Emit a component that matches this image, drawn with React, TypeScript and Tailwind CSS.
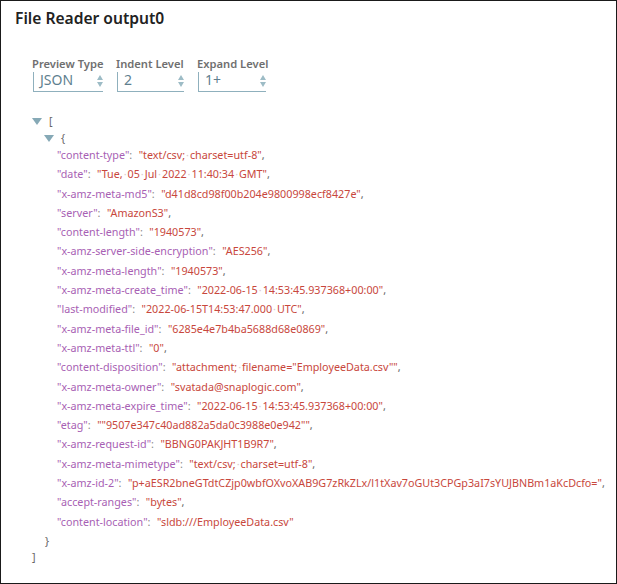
const rows: [string, string][] = [
  ["content-type", "text/csv;~charset=utf-8"],
  ["date", "Tue,~05~Jul~2022~11:40:34~GMT"],
  ["x-amz-meta-md5", "d41d8cd98f00b204e9800998ecf8427e"],
  ["server", "AmazonS3"],
  ["content-length", "1940573"],
  ["x-amz-server-side-encryption", "AES256"],
  ["x-amz-meta-length", "1940573"],
  ["x-amz-meta-create_time", "2022-06-15~14:53:45.937368+00:00"],
  ["last-modified", "2022-06-15T14:53:47.000~UTC"],
  ["x-amz-meta-file_id", "6285e4e7b4ba5688d68e0869"],
  ["x-amz-meta-ttl", "0"],
  ["content-disposition", "attachment;~filename=\"EmployeeData.csv\""],
  ["x-amz-meta-owner", "svatada@snaplogic.com"],
  ["x-amz-meta-expire_time", "2022-06-15~14:53:45.937368+00:00"],
  ["etag", "\"9507e347c40ad882a5da0c3988e0e942\""],
  ["x-amz-request-id", "BBNG0PAKJHT1B9R7"],
  ["x-amz-meta-mimetype", "text/csv;~charset=utf-8"],
  ["x-amz-id-2", "p+aESR2bneGTdtCZjp0wbfOXvoXAB9G7zRkZLx/l1tXav7oGUt3CPGp3aI7sYUJBNBm1aKcDcfo="],
  ["accept-ranges", "bytes"],
  ["content-location", "sldb:///EmployeeData.csv"],
];

function Value({ text }: { text: string }) {
  const parts = text.split("~");
  return (
    <span className="text-[#c8473c]">
      "
      {parts.map((p, i) => (
        <span key={i}>
          {i > 0 && <span className="text-[#dccaca] px-[1px]">·</span>}
          {p}
        </span>
      ))}
      "
    </span>
  );
}

function Spinner({ label, value, width }: { label: string; value: string; width: string }) {
  return (
    <div className={`flex flex-col ${width}`}>
      <div className="text-[11.2px] leading-[14px] font-semibold text-[#6f6f6f] whitespace-nowrap">{label}</div>
      <div className="relative mt-[1px] h-[20px] pb-[4px] border-l border-b border-[#8fb0bd] ml-[1px] pl-[6px] flex items-center text-[14px] leading-[18px] text-[#5f7f8f]">
        {value}
        <div className="absolute right-0 top-[3px] flex flex-col gap-[2px]">
          <div className="w-0 h-0 border-l-[3.5px] border-r-[3.5px] border-b-[5px] border-l-transparent border-r-transparent border-b-[#9dbcc6]" />
          <div className="w-0 h-0 border-l-[3.5px] border-r-[3.5px] border-t-[5px] border-l-transparent border-r-transparent border-t-[#9dbcc6]" />
        </div>
      </div>
    </div>
  );
}

function Caret() {
  return <div className="w-0 h-0 border-l-[5px] border-r-[5px] border-t-[7px] border-l-transparent border-r-transparent border-t-[#86a9b6]" />;
}

export default function App() {
  return (
    <div className="w-[617px] h-[584px] bg-white border border-[#1a1a1a] overflow-hidden font-['Noto_Sans','Open_Sans',sans-serif]">
      <h1 className="mt-[7px] ml-[14px] text-[15.6px] leading-[20px] font-semibold text-[#222222]">File Reader output0</h1>
      <div className="mt-[29px] ml-[31px] flex gap-[13px]">
        <Spinner label="Preview Type" value="JSON" width="w-[71px]" />
        <Spinner label="Indent Level" value="2" width="w-[68px]" />
        <Spinner label="Expand Level" value="1+" width="w-[69px]" />
      </div>
      <div className="mt-[21px] ml-[31px] text-[10.75px] text-[#666666]">
        <div className="flex items-center h-[16px] gap-[7px]">
          <Caret />
          <span>[</span>
        </div>
        <div className="flex items-center h-[16px] gap-[7px] ml-[12px] mt-[1px]">
          <Caret />
          <span>{"{"}</span>
        </div>
        <div className="ml-[25px]">
          {rows.map(([k, v]) => (
            <div key={k} className="h-[19.3px] leading-[19.3px] whitespace-nowrap">
              <span className="text-[#a85fb4]">"{k}"</span>
              <span className="text-[#888888]">:</span>
              <span className="inline-block w-[6.5px]" />
              <Value text={v} />
              {k !== "content-location" && <span className="text-[#666666]">,</span>}
            </div>
          ))}
        </div>
        <div className="ml-[13px] h-[17px] leading-[18px]">{"}"}</div>
        <div className="h-[17px] leading-[17px]">]</div>
      </div>
    </div>
  );
}
